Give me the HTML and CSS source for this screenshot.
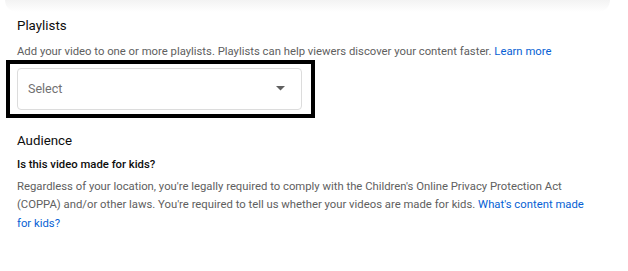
FILE: index.html
```html
<!DOCTYPE html>
<html>
<head>
    <title>Details</title>
    <link rel="stylesheet" href="styles.css">
</head>
<body>
    <div id="topShade"></div>
    <div id="page">
        <section class="section">
            <h2 class="title">Playlists</h2>
            <p class="desc intro">Add your video to one or more playlists. Playlists can help viewers discover your content faster. <a class="link" href="#">Learn more</a></p>
            <div id="highlight">
                <div id="select">
                    <span class="placeholder">Select</span>
                    <svg class="arrow" width="9" height="5" viewBox="0 0 9 5"><path d="M0 0h9L4.5 4.5z" fill="#606060"/></svg>
                </div>
            </div>
        </section>
        <section class="section audience">
            <h2 class="title">Audience</h2>
            <h3 class="question">Is this video made for kids?</h3>
            <p class="desc para">Regardless of your location, you're legally required to comply with the Children's Online Privacy Protection Act (COPPA) and/or other laws. You're required to tell us whether your videos are made for kids. <a class="link" href="#">What's content made for kids?</a></p>
        </section>
    </div>
</body>
</html>
```

FILE: styles.css
```css
body{
    margin: 0px;
    background-color: #ffffff;
    font-family: Roboto, "Liberation Sans", Arial, sans-serif;
}

#topShade{
    height: 12px;
    margin: 0px 18px 0px 5px;
    background: linear-gradient(#f3f3f3, #ffffff);
    border-radius: 0px 0px 30px 30px;
}

#page{
    padding-left: 17px;
    width: 575px;
}

.title{
    margin: 0px;
    font-size: 13.3px;
    font-weight: 400;
    color: #0d0d0d;
    line-height: 20px;
}

.section{
    padding-top: 4px;
}

.desc{
    margin: 6px 0px 0px 0px;
    font-size: 11.3px;
    line-height: 18.5px;
    color: #606060;
}

.intro{
    margin-top: 7px;
}

.link{
    color: #065fd4;
    text-decoration: none;
}

#highlight{
    width: 285px;
    margin: -2px 0px 0px -11px;
    padding: 4px 9px 4px 7px;
    border: 4px solid #000000;
}

#select{
    display: flex;
    justify-content: space-between;
    align-items: center;
    height: 40px;
    padding: 0px 16px 0px 10px;
    border: 1px solid #dcdcdc;
    border-radius: 4px;
}

.placeholder{
    font-size: 12.5px;
    color: #717171;
}

.audience{
    padding-top: 13px;
}

.question{
    margin: 7px 0px 0px 0px;
    font-size: 11.3px;
    font-weight: 500;
    color: #0d0d0d;
}

.para{
    margin-top: 7px;
}
```
